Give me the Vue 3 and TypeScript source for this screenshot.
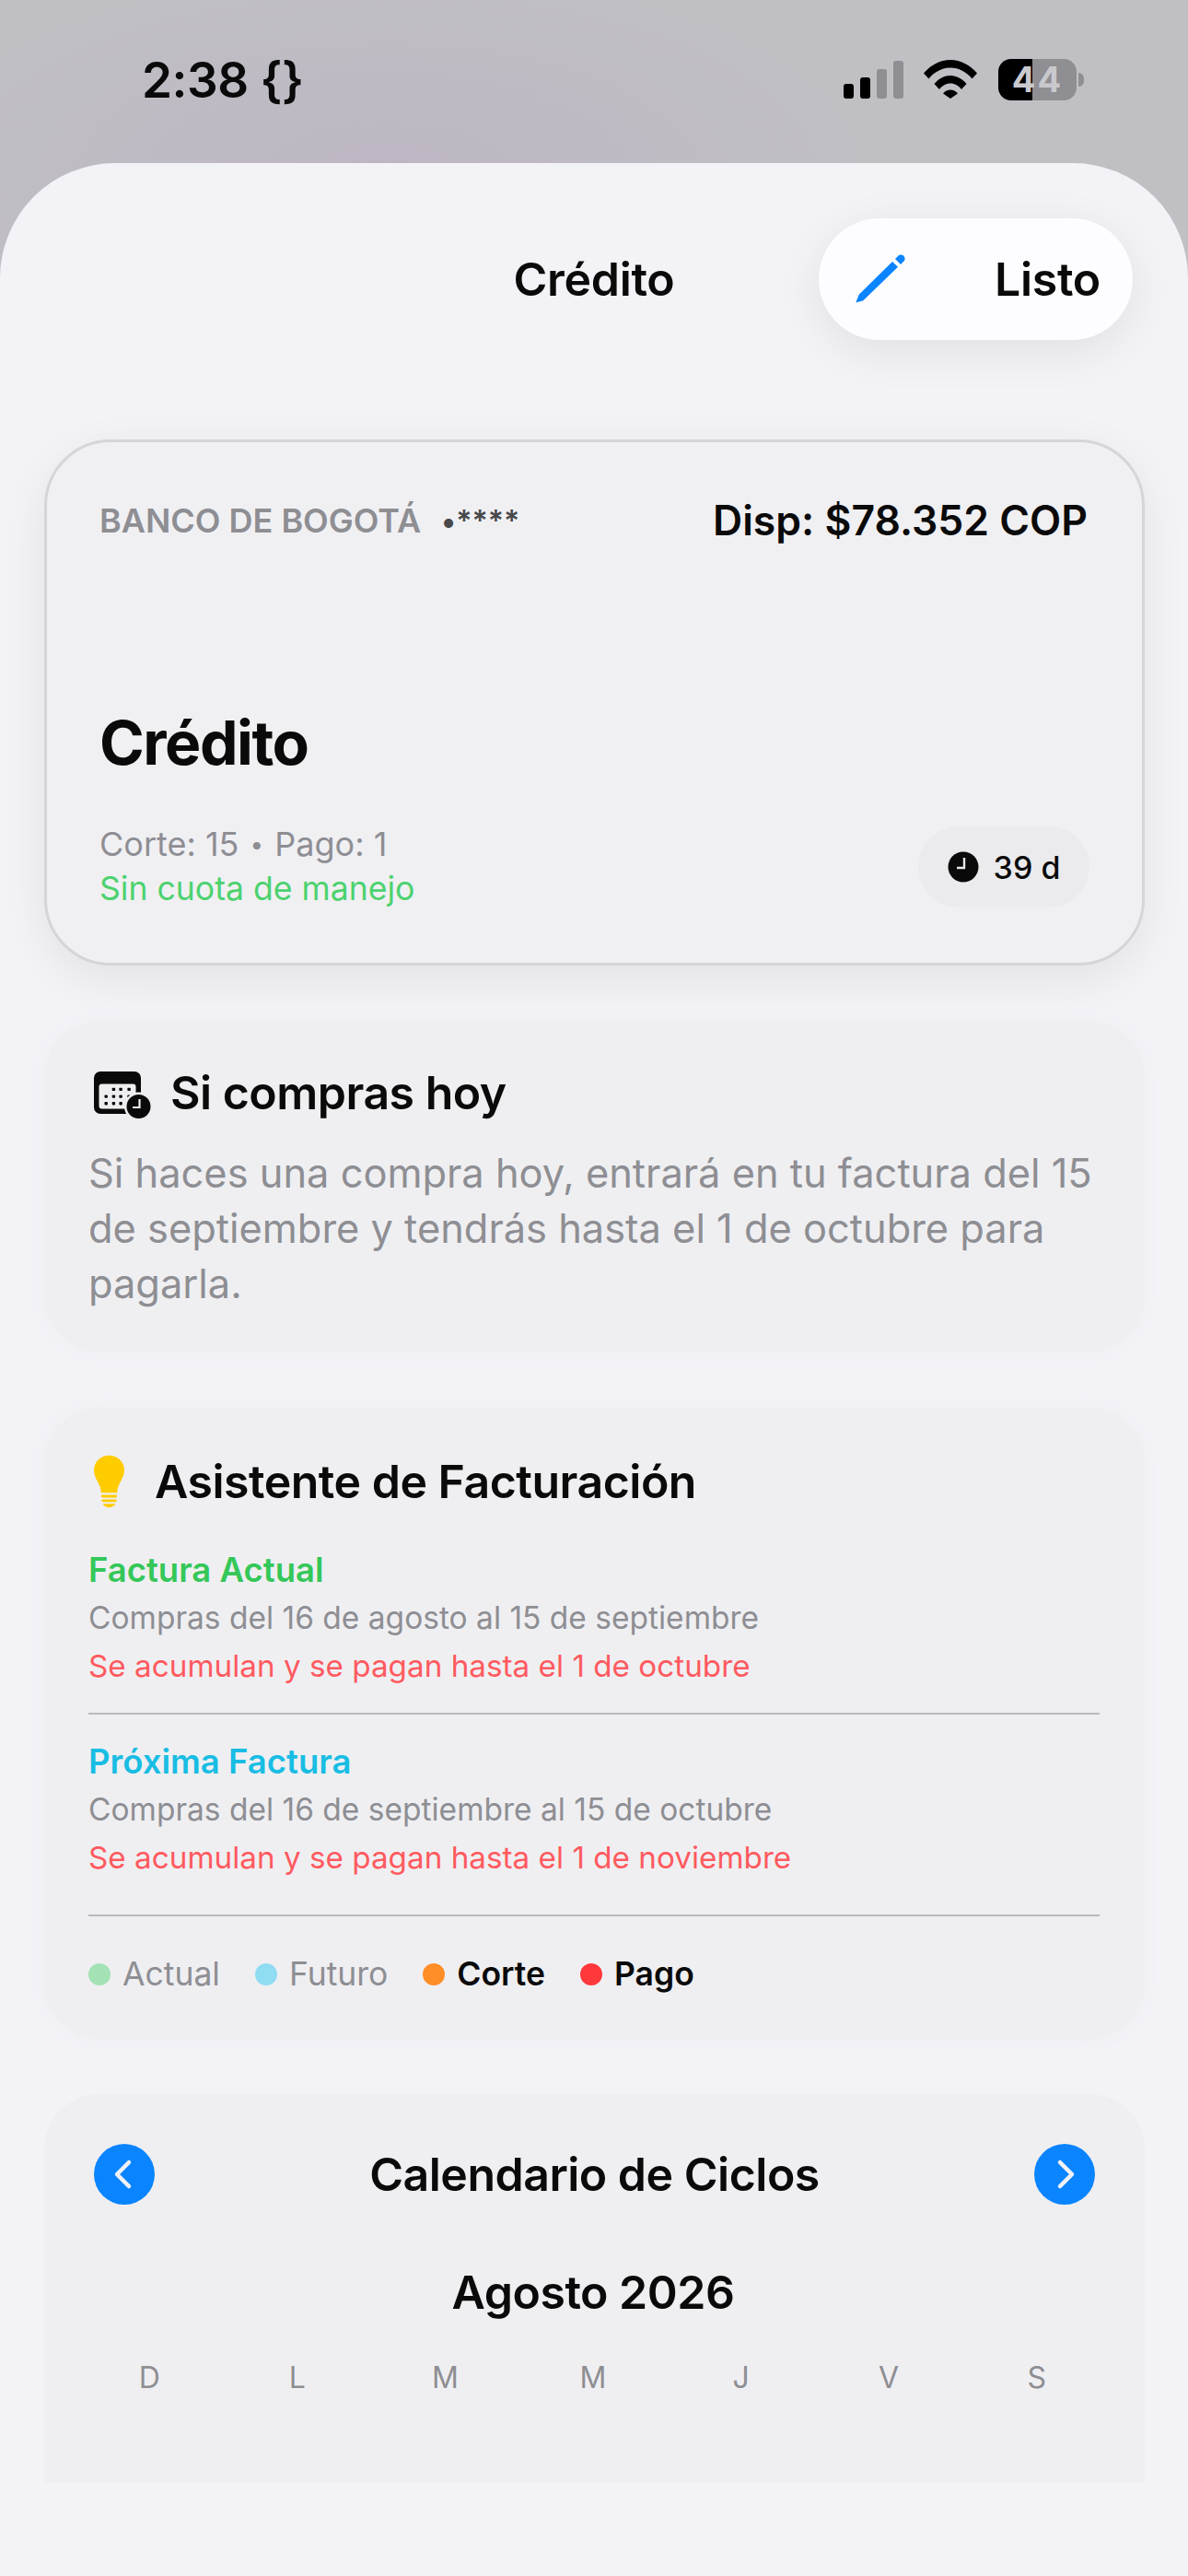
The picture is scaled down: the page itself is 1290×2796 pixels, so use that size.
<script setup lang="ts">
interface BillingRow {
  id: string
  title: string
  range: string
  due: string
}

interface LegendItem {
  label: string
  color: string
  strong: boolean
}

const billingRows: BillingRow[] = [
  {
    id: 'actual',
    title: 'Factura Actual',
    range: 'Compras del 16 de agosto al 15 de septiembre',
    due: 'Se acumulan y se pagan hasta el 1 de octubre',
  },
  {
    id: 'proxima',
    title: 'Próxima Factura',
    range: 'Compras del 16 de septiembre al 15 de octubre',
    due: 'Se acumulan y se pagan hasta el 1 de noviembre',
  },
]

const legend: LegendItem[] = [
  { label: 'Actual', color: '#a3e2b4', strong: false },
  { label: 'Futuro', color: '#90dcf2', strong: false },
  { label: 'Corte', color: '#ff8d28', strong: true },
  { label: 'Pago', color: '#ff383c', strong: true },
]

const weekDays = ['D', 'L', 'M', 'M', 'J', 'V', 'S']

// puntos del mini calendario, [x, y]
const calDots: [number, number][] = [
  [19.7, 17.7], [27.4, 17.7], [36.4, 17.7],
  [11.5, 25.4], [19.7, 25.4], [27.4, 25.4], [36.4, 25.4],
  [11.5, 33], [19.7, 33], [27.4, 33],
]
</script>

<template>
  <div class="screen">
    <header class="status">
      <span class="status__time">2:38 {}</span>
      <div class="status__icons">
        <div class="signal" aria-hidden="true">
          <i class="signal__bar signal__bar--1"></i>
          <i class="signal__bar signal__bar--2"></i>
          <i class="signal__bar signal__bar--3"></i>
          <i class="signal__bar signal__bar--4"></i>
        </div>
        <svg class="wifi" viewBox="0 0 58 42" aria-hidden="true">
          <path d="M0 14.500C7.500 5.500 18 0 29 0s21.500 5.500 29 14.500l-5.500 6C46.500 13 38 8.500 29 8.500S11.500 13 5.500 20.500z" />
          <path d="M11.500 26C16 20.500 22.500 17 29 17s13 3.500 17.500 9l-5.500 6C38 28 33.500 25.500 29 25.500S20 28 17 32z" />
          <path d="M21 36.500c2-2.500 5-4 8-4s6 1.500 8 4l-8 5.500z" />
        </svg>
        <div class="battery">
          <span class="battery__body">44</span>
          <i class="battery__nub"></i>
        </div>
      </div>
    </header>

    <main class="sheet">
      <div class="nav">
        <span></span>
        <h1 class="nav__title">Crédito</h1>
        <div class="nav__pill">
          <svg class="nav__pencil" viewBox="0 0 54 54" aria-hidden="true">
            <path d="M0.300 52.500 3.700 43.700 40 8 46 13.700 8.300 50.300z" />
            <path d="M43 5 46.500 1.500C48 0 50.500 0 52.300 1.700 54 3.500 54 6 52.500 7.500L49 11z" />
          </svg>
          <span>Listo</span>
        </div>
      </div>

      <section class="card card--hero">
        <div class="hero__top">
          <div class="hero__bank">
            <span>BANCO DE BOGOTÁ</span>
            <span class="hero__digits">•****</span>
          </div>
          <span class="hero__available">Disp: $78.352 COP</span>
        </div>
        <h2 class="hero__name">Crédito</h2>
        <div class="hero__bottom">
          <div>
            <p class="hero__dates">Corte: 15 <span class="hero__sep">•</span> Pago: 1</p>
            <p class="hero__fee">Sin cuota de manejo</p>
          </div>
          <div class="hero__badge">
            <svg viewBox="0 0 34 34" aria-hidden="true">
              <circle cx="17" cy="17" r="16.500" fill="#0a0a0a" />
              <path d="M18 7v11h-8" fill="none" stroke="#e8e8ea" stroke-width="2.400" />
            </svg>
            <span>39 d</span>
          </div>
        </div>
      </section>

      <section class="card card--today">
        <div class="card__head card__head--today">
          <svg class="icon-cal" viewBox="0 0 62 52" aria-hidden="true">
            <rect x="0" y="0" width="51" height="46" rx="7" fill="#0a0a0a" />
            <rect x="5.500" y="13.500" width="40" height="27" rx="3" fill="#eeeef1" />
            <rect
              v-for="(dot, i) in calDots"
              :key="i"
              :x="dot[0]"
              :y="dot[1]"
              width="3.400"
              height="3.400"
              rx="0.800"
              fill="#0a0a0a"
            />
            <circle cx="48.500" cy="38" r="15.500" fill="#eeeef1" />
            <circle cx="48.500" cy="38" r="13" fill="#0a0a0a" />
            <path d="M49.500 30v9h-7.500" fill="none" stroke="#eeeef1" stroke-width="2.200" />
          </svg>
          <h3 class="card__title">Si compras hoy</h3>
        </div>
        <p class="today__text">
          Si haces una compra hoy, entrará en tu factura del 15 de septiembre y tendrás hasta el 1 de octubre para pagarla.
        </p>
      </section>

      <section class="card card--billing">
        <div class="card__head card__head--billing">
          <svg class="icon-bulb" viewBox="0 0 34 58" aria-hidden="true">
            <path d="M17 0C7.500 0 0 7.200 0 16.500c0 8 5 12.500 7 19 .6 2 .8 4 1 6h18c.2-2 .4-4 1-6 2-6.500 7-11 7-19C34 7.200 26.500 0 17 0z" fill="#ffcc00" />
            <rect x="8" y="44" width="18" height="3" rx="1.500" fill="#ffcc00" />
            <rect x="8.500" y="49" width="17" height="3" rx="1.500" fill="#ffcc00" />
            <path d="M10 54h14c-1 2.500-3.500 4-7 4s-6-1.500-7-4z" fill="#ffcc00" />
          </svg>
          <h3 class="card__title">Asistente de Facturación</h3>
        </div>

        <div
          v-for="row in billingRows"
          :key="row.id"
          class="billing__row"
        >
          <p class="billing__title" :class="`billing__title--${row.id}`">{{ row.title }}</p>
          <p class="billing__range">{{ row.range }}</p>
          <p class="billing__due">{{ row.due }}</p>
        </div>

        <div class="legend">
          <div v-for="item in legend" :key="item.label" class="legend__item">
            <i class="legend__dot" :style="{ background: item.color }"></i>
            <span :class="{ 'legend__label--strong': item.strong }">{{ item.label }}</span>
          </div>
        </div>
      </section>

      <section class="card card--calendar">
        <div class="cal__head">
          <button type="button" class="cal__btn" aria-label="Anterior">
            <svg viewBox="0 0 66 66" aria-hidden="true"><path d="M38 20 25 33l13 13" /></svg>
          </button>
          <h3 class="card__title">Calendario de Ciclos</h3>
          <button type="button" class="cal__btn" aria-label="Siguiente">
            <svg viewBox="0 0 66 66" aria-hidden="true"><path d="M28 20l13 13-13 13" /></svg>
          </button>
        </div>
        <h4 class="cal__month">Agosto 2026</h4>
        <div class="cal__week">
          <span v-for="(day, i) in weekDays" :key="i">{{ day }}</span>
        </div>
      </section>
    </main>
  </div>
</template>

<style>
html,
body {
  margin: 0;
  background: #f2f2f7;
}
</style>

<style scoped>
.screen {
  width: 1290px;
  height: 2796px;
  overflow: hidden;
  display: flex;
  flex-direction: column;
  font-family: Inter, "Liberation Sans", sans-serif;
  color: #0a0a0a;
  background: radial-gradient(ellipse 520px 220px at 420px 190px, #bdb6c3, #c0bfc4 100%);
}

h1,
h2,
h3,
h4,
p {
  margin: 0;
}

.status {
  height: 177px;
  flex: none;
  display: flex;
  justify-content: space-between;
  padding: 60px 113px 0 154px;
  box-sizing: border-box;
}

.status__time {
  font-size: 53px;
  line-height: 54px;
  font-weight: 600;
  letter-spacing: -0.5px;
}

.status__icons {
  display: flex;
  align-items: flex-start;
  padding-top: 4px;
}

.signal {
  display: flex;
  align-items: flex-end;
  gap: 7px;
  height: 41px;
  margin-top: 2px;
}

.signal__bar {
  width: 11px;
  border-radius: 3px;
  background: #000;
}

.signal__bar--1 {
  height: 16px;
}

.signal__bar--2 {
  height: 23px;
}

.signal__bar--3 {
  height: 32px;
  background: #8e8e93;
}

.signal__bar--4 {
  height: 41px;
  background: #8e8e93;
}

.wifi {
  width: 58px;
  height: 42px;
  margin: 1px 23px 0 22px;
}

.battery {
  display: flex;
  align-items: center;
}

.battery__body {
  width: 85px;
  height: 45px;
  border-radius: 14px;
  background: linear-gradient(90deg, #000 44%, #8e8e93 44%);
  color: #c9c9cd;
  font-size: 38px;
  line-height: 45px;
  font-weight: 700;
  text-align: center;
  letter-spacing: 2px;
}

.battery__nub {
  width: 6px;
  height: 15px;
  margin-left: 2px;
  border-radius: 0 6px 6px 0;
  background: #8e8e93;
}

.sheet {
  flex: 1;
  background: #f2f2f7;
  border-radius: 125px 125px 0 0;
  padding-top: 60px;
}

.nav {
  display: grid;
  grid-template-columns: 341px 1fr 341px;
  align-items: center;
  padding: 0 60px;
  margin-bottom: 108px;
}

.nav__title {
  font-size: 50px;
  font-weight: 600;
  letter-spacing: -0.3px;
  text-align: center;
}

.nav__pill {
  height: 132px;
  box-sizing: border-box;
  padding: 0 35px 0 40px;
  border-radius: 66px;
  background: #fdfdff;
  box-shadow: 0 12px 50px rgba(0, 0, 0, 0.08);
  display: flex;
  align-items: center;
  justify-content: space-between;
  font-size: 50px;
  font-weight: 600;
  letter-spacing: -0.3px;
}

.nav__pencil {
  width: 54px;
  height: 54px;
  fill: #0a84ff;
}

.card {
  margin: 0 47px 60px 48px;
  box-sizing: border-box;
  background: #efeff2;
  box-shadow: 0 0 14px rgba(239, 239, 242, 0.9);
}

.card--hero {
  height: 571px;
  margin-bottom: 61px;
  padding: 58px 59px 0 57px;
  border-radius: 72px;
  border: 3px solid #d5d5d9;
  box-shadow: 0 14px 50px rgba(0, 0, 0, 0.07);
  background: #f0f0f3;
}

.hero__top {
  display: flex;
  justify-content: space-between;
  align-items: center;
}

.hero__bank {
  display: flex;
  align-items: center;
  gap: 22px;
  color: #8e8e93;
  font-size: 36px;
  font-weight: 600;
}

.hero__digits {
  color: #48484a;
  font-size: 32px;
}

.hero__available {
  font-size: 44.500px;
  font-weight: 600;
}

.hero__name {
  margin-top: 174px;
  font-size: 66px;
  line-height: 80px;
  font-weight: 700;
  letter-spacing: -1.500px;
}

.hero__bottom {
  margin-top: 46px;
  display: flex;
  justify-content: space-between;
  align-items: flex-end;
}

.hero__dates,
.hero__fee {
  font-size: 36px;
  line-height: 48px;
  color: #8e8e93;
}

.hero__sep {
  margin: 0 2px;
  font-size: 26px;
  vertical-align: 3px;
}

.hero__fee {
  font-size: 35.600px;
  color: #4cd26f;
}

.hero__badge {
  width: 186px;
  height: 88px;
  margin: 0 -2px 4px 0;
  border-radius: 44px;
  background: #ebebed;
  display: flex;
  align-items: center;
  justify-content: center;
  gap: 16px;
  font-size: 34px;
  font-weight: 500;
}

.hero__badge svg {
  width: 34px;
  height: 34px;
}

.card__head {
  display: flex;
  align-items: center;
}

.card__title {
  font-size: 50px;
  line-height: 60px;
  font-weight: 600;
  letter-spacing: -0.5px;
}

.card--today {
  height: 358px;
  margin-bottom: 61px;
  padding: 47px 52px 0 48px;
  border-radius: 60px;
}

.card__head--today {
  gap: 21px;
  padding-left: 6px;
}

.icon-cal {
  width: 62px;
  height: 52px;
  margin-top: 6px;
  overflow: visible;
}

.today__text {
  margin-top: 27px;
  font-size: 43.400px;
  line-height: 60px;
  color: #8e8e93;
}

.card--billing {
  height: 685px;
  padding: 50px 49px 0 48px;
  border-radius: 60px;
}

.card__head--billing {
  gap: 33px;
  padding-left: 6px;
  margin-bottom: 40px;
}

.icon-bulb {
  width: 33px;
  height: 58px;
}

.billing__row {
  padding-bottom: 25px;
  border-bottom: 2px solid #b9b9bd;
  margin-bottom: 25px;
}

.billing__row + .billing__row {
  padding-bottom: 36px;
}

.billing__title {
  font-size: 36.500px;
  line-height: 52px;
  font-weight: 600;
}

.billing__title--actual {
  color: #34c759;
}

.billing__title--proxima {
  color: #19bde3;
}

.billing__range,
.billing__due {
  font-size: 33.500px;
  line-height: 52px;
  color: #8e8e93;
}

.billing__due {
  font-size: 33.250px;
  color: #ff5a5f;
}

.legend {
  display: flex;
  gap: 38px;
  margin-top: 41px;
  font-size: 35.500px;
  line-height: 44px;
  color: #8e8e93;
}

.legend__item {
  display: flex;
  align-items: center;
  gap: 13px;
}

.legend__dot {
  width: 24px;
  height: 24px;
  border-radius: 50%;
}

.legend__label--strong {
  color: #0a0a0a;
  font-weight: 600;
}

.card--calendar {
  height: 422px;
  margin-bottom: 0;
  padding: 54px 37px 0 34px;
  border-radius: 60px 60px 0 0;
  box-shadow: none;
}

.cal__head {
  display: flex;
  align-items: center;
  justify-content: space-between;
  padding: 0 17px 0 20px;
}

.cal__btn {
  width: 66px;
  height: 66px;
  padding: 0;
  border: none;
  border-radius: 50%;
  background: #0a84ff;
}

.cal__btn svg {
  display: block;
  fill: none;
  stroke: #f2f2f7;
  stroke-width: 4.500;
  stroke-linecap: round;
  stroke-linejoin: round;
}

.cal__month {
  margin-top: 65px;
  text-align: center;
  font-size: 50px;
  line-height: 60px;
  font-weight: 600;
  letter-spacing: -0.5px;
}

.cal__week {
  margin-top: 43px;
  display: grid;
  grid-template-columns: repeat(7, 1fr);
  text-align: center;
  font-size: 32px;
  line-height: 40px;
  color: #8e8e93;
}
</style>
